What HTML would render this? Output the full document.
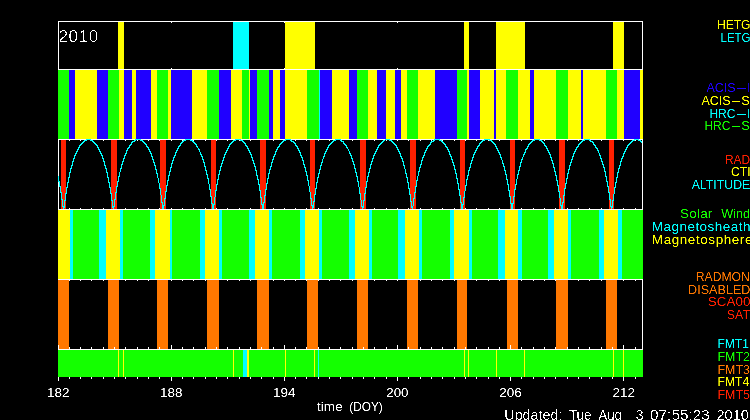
<!DOCTYPE html>
<html><head><meta charset="utf-8"><title>plot</title>
<style>
html,body{margin:0;padding:0;background:#000;}
svg{display:block;}
text{font-family:"Liberation Sans",sans-serif;}
</style></head><body>
<svg width="750" height="420" viewBox="0 0 750 420">
<rect width="750" height="420" fill="#000"/>
<g shape-rendering="crispEdges">
<rect x="58" y="21" width="585" height="1" fill="#ffffff"/>
<rect x="58" y="69" width="585" height="1" fill="#ffffff"/>
<rect x="58" y="21" width="1" height="49" fill="#ffffff"/>
<rect x="642" y="21" width="1" height="49" fill="#ffffff"/>
<rect x="58" y="22" width="1" height="1" fill="#ffffff"/>
<rect x="58" y="68" width="1" height="1" fill="#ffffff"/>
<rect x="171" y="22" width="1" height="1" fill="#ffffff"/>
<rect x="171" y="68" width="1" height="1" fill="#ffffff"/>
<rect x="284" y="22" width="1" height="1" fill="#ffffff"/>
<rect x="284" y="68" width="1" height="1" fill="#ffffff"/>
<rect x="397" y="22" width="1" height="1" fill="#ffffff"/>
<rect x="397" y="68" width="1" height="1" fill="#ffffff"/>
<rect x="510" y="22" width="1" height="1" fill="#ffffff"/>
<rect x="510" y="68" width="1" height="1" fill="#ffffff"/>
<rect x="623" y="22" width="1" height="1" fill="#ffffff"/>
<rect x="623" y="68" width="1" height="1" fill="#ffffff"/>
<rect x="118" y="22" width="6" height="48" fill="#ffff00"/>
<rect x="233" y="22" width="16" height="48" fill="#00ffff"/>
<rect x="285" y="22" width="30" height="48" fill="#ffff00"/>
<rect x="464" y="22" width="5" height="48" fill="#ffff00"/>
<rect x="496" y="22" width="29" height="48" fill="#ffff00"/>
<rect x="613" y="22" width="11" height="48" fill="#ffff00"/>
<rect x="58" y="69" width="585" height="1" fill="#ffffff"/>
<rect x="58" y="139" width="585" height="1" fill="#ffffff"/>
<rect x="58" y="69" width="1" height="71" fill="#ffffff"/>
<rect x="642" y="69" width="1" height="71" fill="#ffffff"/>
<rect x="58" y="70" width="11" height="70" fill="#14ff00"/>
<rect x="69" y="70" width="6" height="70" fill="#2000ff"/>
<rect x="75" y="70" width="22" height="70" fill="#ffff00"/>
<rect x="97" y="70" width="11" height="70" fill="#2000ff"/>
<rect x="108" y="70" width="11" height="70" fill="#14ff00"/>
<rect x="119" y="70" width="5" height="70" fill="#ffff00"/>
<rect x="124" y="70" width="8" height="70" fill="#2000ff"/>
<rect x="132" y="70" width="4" height="70" fill="#ffff00"/>
<rect x="136" y="70" width="15" height="70" fill="#2000ff"/>
<rect x="151" y="70" width="6" height="70" fill="#ffff00"/>
<rect x="157" y="70" width="11" height="70" fill="#14ff00"/>
<rect x="168" y="70" width="3" height="70" fill="#ffff00"/>
<rect x="171" y="70" width="21" height="70" fill="#2000ff"/>
<rect x="192" y="70" width="15" height="70" fill="#ffff00"/>
<rect x="207" y="70" width="12" height="70" fill="#14ff00"/>
<rect x="219" y="70" width="12" height="70" fill="#2000ff"/>
<rect x="231" y="70" width="11" height="70" fill="#ffff00"/>
<rect x="242" y="70" width="7" height="70" fill="#14ff00"/>
<rect x="249" y="70" width="1" height="70" fill="#ffff00"/>
<rect x="250" y="70" width="7" height="70" fill="#2000ff"/>
<rect x="257" y="70" width="12" height="70" fill="#14ff00"/>
<rect x="269" y="70" width="4" height="70" fill="#2000ff"/>
<rect x="273" y="70" width="7" height="70" fill="#ffff00"/>
<rect x="280" y="70" width="5" height="70" fill="#2000ff"/>
<rect x="285" y="70" width="22" height="70" fill="#ffff00"/>
<rect x="307" y="70" width="12" height="70" fill="#14ff00"/>
<rect x="319" y="70" width="1" height="70" fill="#00ffff"/>
<rect x="320" y="70" width="12" height="70" fill="#2000ff"/>
<rect x="332" y="70" width="17" height="70" fill="#ffff00"/>
<rect x="349" y="70" width="8" height="70" fill="#2000ff"/>
<rect x="357" y="70" width="11" height="70" fill="#14ff00"/>
<rect x="368" y="70" width="9" height="70" fill="#ffff00"/>
<rect x="377" y="70" width="9" height="70" fill="#2000ff"/>
<rect x="386" y="70" width="9" height="70" fill="#ffff00"/>
<rect x="395" y="70" width="6" height="70" fill="#2000ff"/>
<rect x="401" y="70" width="6" height="70" fill="#ffff00"/>
<rect x="407" y="70" width="11" height="70" fill="#14ff00"/>
<rect x="418" y="70" width="17" height="70" fill="#ffff00"/>
<rect x="435" y="70" width="22" height="70" fill="#2000ff"/>
<rect x="457" y="70" width="10" height="70" fill="#14ff00"/>
<rect x="467" y="70" width="2" height="70" fill="#ffff00"/>
<rect x="469" y="70" width="11" height="70" fill="#2000ff"/>
<rect x="480" y="70" width="14" height="70" fill="#ffff00"/>
<rect x="494" y="70" width="2" height="70" fill="#2000ff"/>
<rect x="496" y="70" width="10" height="70" fill="#ffff00"/>
<rect x="506" y="70" width="12" height="70" fill="#14ff00"/>
<rect x="518" y="70" width="12" height="70" fill="#ffff00"/>
<rect x="530" y="70" width="4" height="70" fill="#2000ff"/>
<rect x="534" y="70" width="22" height="70" fill="#ffff00"/>
<rect x="556" y="70" width="12" height="70" fill="#14ff00"/>
<rect x="568" y="70" width="13" height="70" fill="#ffff00"/>
<rect x="581" y="70" width="2" height="70" fill="#2000ff"/>
<rect x="583" y="70" width="23" height="70" fill="#ffff00"/>
<rect x="606" y="70" width="11" height="70" fill="#14ff00"/>
<rect x="617" y="70" width="7" height="70" fill="#ffff00"/>
<rect x="624" y="70" width="16" height="70" fill="#2000ff"/>
<rect x="640" y="70" width="3" height="70" fill="#ffff00"/>
<rect x="58" y="139" width="585" height="1" fill="#ffffff"/>
<rect x="58" y="209" width="585" height="1" fill="#ffffff"/>
<rect x="58" y="139" width="1" height="71" fill="#ffffff"/>
<rect x="642" y="139" width="1" height="71" fill="#ffffff"/>
<rect x="58" y="140" width="1" height="1" fill="#ffffff"/>
<rect x="58" y="208" width="1" height="1" fill="#ffffff"/>
<rect x="69" y="140" width="1" height="1" fill="#ffffff"/>
<rect x="69" y="208" width="1" height="1" fill="#ffffff"/>
<rect x="80" y="140" width="1" height="1" fill="#ffffff"/>
<rect x="80" y="208" width="1" height="1" fill="#ffffff"/>
<rect x="91" y="140" width="1" height="1" fill="#ffffff"/>
<rect x="91" y="208" width="1" height="1" fill="#ffffff"/>
<rect x="103" y="140" width="1" height="1" fill="#ffffff"/>
<rect x="103" y="208" width="1" height="1" fill="#ffffff"/>
<rect x="114" y="140" width="1" height="1" fill="#ffffff"/>
<rect x="114" y="208" width="1" height="1" fill="#ffffff"/>
<rect x="125" y="140" width="1" height="1" fill="#ffffff"/>
<rect x="125" y="208" width="1" height="1" fill="#ffffff"/>
<rect x="137" y="140" width="1" height="1" fill="#ffffff"/>
<rect x="137" y="208" width="1" height="1" fill="#ffffff"/>
<rect x="148" y="140" width="1" height="1" fill="#ffffff"/>
<rect x="148" y="208" width="1" height="1" fill="#ffffff"/>
<rect x="159" y="140" width="1" height="1" fill="#ffffff"/>
<rect x="159" y="208" width="1" height="1" fill="#ffffff"/>
<rect x="171" y="140" width="1" height="1" fill="#ffffff"/>
<rect x="171" y="208" width="1" height="1" fill="#ffffff"/>
<rect x="182" y="140" width="1" height="1" fill="#ffffff"/>
<rect x="182" y="208" width="1" height="1" fill="#ffffff"/>
<rect x="193" y="140" width="1" height="1" fill="#ffffff"/>
<rect x="193" y="208" width="1" height="1" fill="#ffffff"/>
<rect x="205" y="140" width="1" height="1" fill="#ffffff"/>
<rect x="205" y="208" width="1" height="1" fill="#ffffff"/>
<rect x="216" y="140" width="1" height="1" fill="#ffffff"/>
<rect x="216" y="208" width="1" height="1" fill="#ffffff"/>
<rect x="227" y="140" width="1" height="1" fill="#ffffff"/>
<rect x="227" y="208" width="1" height="1" fill="#ffffff"/>
<rect x="239" y="140" width="1" height="1" fill="#ffffff"/>
<rect x="239" y="208" width="1" height="1" fill="#ffffff"/>
<rect x="250" y="140" width="1" height="1" fill="#ffffff"/>
<rect x="250" y="208" width="1" height="1" fill="#ffffff"/>
<rect x="261" y="140" width="1" height="1" fill="#ffffff"/>
<rect x="261" y="208" width="1" height="1" fill="#ffffff"/>
<rect x="273" y="140" width="1" height="1" fill="#ffffff"/>
<rect x="273" y="208" width="1" height="1" fill="#ffffff"/>
<rect x="284" y="140" width="1" height="1" fill="#ffffff"/>
<rect x="284" y="208" width="1" height="1" fill="#ffffff"/>
<rect x="295" y="140" width="1" height="1" fill="#ffffff"/>
<rect x="295" y="208" width="1" height="1" fill="#ffffff"/>
<rect x="306" y="140" width="1" height="1" fill="#ffffff"/>
<rect x="306" y="208" width="1" height="1" fill="#ffffff"/>
<rect x="318" y="140" width="1" height="1" fill="#ffffff"/>
<rect x="318" y="208" width="1" height="1" fill="#ffffff"/>
<rect x="329" y="140" width="1" height="1" fill="#ffffff"/>
<rect x="329" y="208" width="1" height="1" fill="#ffffff"/>
<rect x="340" y="140" width="1" height="1" fill="#ffffff"/>
<rect x="340" y="208" width="1" height="1" fill="#ffffff"/>
<rect x="352" y="140" width="1" height="1" fill="#ffffff"/>
<rect x="352" y="208" width="1" height="1" fill="#ffffff"/>
<rect x="363" y="140" width="1" height="1" fill="#ffffff"/>
<rect x="363" y="208" width="1" height="1" fill="#ffffff"/>
<rect x="374" y="140" width="1" height="1" fill="#ffffff"/>
<rect x="374" y="208" width="1" height="1" fill="#ffffff"/>
<rect x="386" y="140" width="1" height="1" fill="#ffffff"/>
<rect x="386" y="208" width="1" height="1" fill="#ffffff"/>
<rect x="397" y="140" width="1" height="1" fill="#ffffff"/>
<rect x="397" y="208" width="1" height="1" fill="#ffffff"/>
<rect x="408" y="140" width="1" height="1" fill="#ffffff"/>
<rect x="408" y="208" width="1" height="1" fill="#ffffff"/>
<rect x="420" y="140" width="1" height="1" fill="#ffffff"/>
<rect x="420" y="208" width="1" height="1" fill="#ffffff"/>
<rect x="431" y="140" width="1" height="1" fill="#ffffff"/>
<rect x="431" y="208" width="1" height="1" fill="#ffffff"/>
<rect x="442" y="140" width="1" height="1" fill="#ffffff"/>
<rect x="442" y="208" width="1" height="1" fill="#ffffff"/>
<rect x="454" y="140" width="1" height="1" fill="#ffffff"/>
<rect x="454" y="208" width="1" height="1" fill="#ffffff"/>
<rect x="465" y="140" width="1" height="1" fill="#ffffff"/>
<rect x="465" y="208" width="1" height="1" fill="#ffffff"/>
<rect x="476" y="140" width="1" height="1" fill="#ffffff"/>
<rect x="476" y="208" width="1" height="1" fill="#ffffff"/>
<rect x="488" y="140" width="1" height="1" fill="#ffffff"/>
<rect x="488" y="208" width="1" height="1" fill="#ffffff"/>
<rect x="499" y="140" width="1" height="1" fill="#ffffff"/>
<rect x="499" y="208" width="1" height="1" fill="#ffffff"/>
<rect x="510" y="140" width="1" height="1" fill="#ffffff"/>
<rect x="510" y="208" width="1" height="1" fill="#ffffff"/>
<rect x="521" y="140" width="1" height="1" fill="#ffffff"/>
<rect x="521" y="208" width="1" height="1" fill="#ffffff"/>
<rect x="533" y="140" width="1" height="1" fill="#ffffff"/>
<rect x="533" y="208" width="1" height="1" fill="#ffffff"/>
<rect x="544" y="140" width="1" height="1" fill="#ffffff"/>
<rect x="544" y="208" width="1" height="1" fill="#ffffff"/>
<rect x="555" y="140" width="1" height="1" fill="#ffffff"/>
<rect x="555" y="208" width="1" height="1" fill="#ffffff"/>
<rect x="567" y="140" width="1" height="1" fill="#ffffff"/>
<rect x="567" y="208" width="1" height="1" fill="#ffffff"/>
<rect x="578" y="140" width="1" height="1" fill="#ffffff"/>
<rect x="578" y="208" width="1" height="1" fill="#ffffff"/>
<rect x="589" y="140" width="1" height="1" fill="#ffffff"/>
<rect x="589" y="208" width="1" height="1" fill="#ffffff"/>
<rect x="601" y="140" width="1" height="1" fill="#ffffff"/>
<rect x="601" y="208" width="1" height="1" fill="#ffffff"/>
<rect x="612" y="140" width="1" height="1" fill="#ffffff"/>
<rect x="612" y="208" width="1" height="1" fill="#ffffff"/>
<rect x="623" y="140" width="1" height="1" fill="#ffffff"/>
<rect x="623" y="208" width="1" height="1" fill="#ffffff"/>
<rect x="635" y="140" width="1" height="1" fill="#ffffff"/>
<rect x="635" y="208" width="1" height="1" fill="#ffffff"/>
<rect x="61" y="140" width="5" height="70" fill="#ff2000"/>
<rect x="111" y="140" width="6" height="70" fill="#ff2000"/>
<rect x="160" y="140" width="6" height="70" fill="#ff2000"/>
<rect x="211" y="140" width="5" height="70" fill="#ff2000"/>
<rect x="260" y="140" width="6" height="70" fill="#ff2000"/>
<rect x="310" y="140" width="5" height="70" fill="#ff2000"/>
<rect x="360" y="140" width="6" height="70" fill="#ff2000"/>
<rect x="410" y="140" width="6" height="70" fill="#ff2000"/>
<rect x="460" y="140" width="5" height="70" fill="#ff2000"/>
<rect x="510" y="140" width="5" height="70" fill="#ff2000"/>
<rect x="559" y="140" width="6" height="70" fill="#ff2000"/>
<rect x="609" y="140" width="5" height="70" fill="#ff2000"/>
<g fill="#00ffff"><rect x="58" y="176" width="1" height="6"/><rect x="59" y="181" width="1" height="6"/><rect x="60" y="186" width="1" height="7"/><rect x="61" y="192" width="1" height="8"/><rect x="62" y="199" width="1" height="8"/><rect x="63" y="206" width="1" height="3"/><rect x="64" y="200" width="1" height="8"/><rect x="65" y="193" width="1" height="8"/><rect x="66" y="187" width="1" height="7"/><rect x="67" y="182" width="1" height="6"/><rect x="68" y="177" width="1" height="6"/><rect x="69" y="172" width="1" height="6"/><rect x="70" y="168" width="1" height="5"/><rect x="71" y="165" width="1" height="4"/><rect x="72" y="161" width="1" height="5"/><rect x="73" y="158" width="1" height="4"/><rect x="74" y="155" width="1" height="4"/><rect x="75" y="153" width="1" height="3"/><rect x="76" y="151" width="1" height="3"/><rect x="77" y="149" width="1" height="3"/><rect x="78" y="147" width="1" height="3"/><rect x="79" y="145" width="1" height="3"/><rect x="80" y="144" width="1" height="2"/><rect x="81" y="143" width="1" height="2"/><rect x="82" y="142" width="1" height="2"/><rect x="83" y="141" width="1" height="2"/><rect x="84" y="140" width="1" height="2"/><rect x="85" y="140" width="1" height="1"/><rect x="86" y="139" width="1" height="2"/><rect x="87" y="139" width="1" height="1"/><rect x="88" y="139" width="1" height="1"/><rect x="89" y="139" width="1" height="1"/><rect x="90" y="139" width="1" height="2"/><rect x="91" y="140" width="1" height="1"/><rect x="92" y="140" width="1" height="2"/><rect x="93" y="141" width="1" height="2"/><rect x="94" y="142" width="1" height="2"/><rect x="95" y="143" width="1" height="2"/><rect x="96" y="144" width="1" height="2"/><rect x="97" y="145" width="1" height="3"/><rect x="98" y="147" width="1" height="3"/><rect x="99" y="149" width="1" height="3"/><rect x="100" y="151" width="1" height="3"/><rect x="101" y="153" width="1" height="3"/><rect x="102" y="155" width="1" height="4"/><rect x="103" y="158" width="1" height="4"/><rect x="104" y="161" width="1" height="5"/><rect x="105" y="165" width="1" height="4"/><rect x="106" y="168" width="1" height="5"/><rect x="107" y="172" width="1" height="6"/><rect x="108" y="177" width="1" height="6"/><rect x="109" y="182" width="1" height="6"/><rect x="110" y="187" width="1" height="7"/><rect x="111" y="193" width="1" height="8"/><rect x="112" y="200" width="1" height="8"/><rect x="113" y="206" width="1" height="3"/><rect x="114" y="199" width="1" height="8"/><rect x="115" y="192" width="1" height="8"/><rect x="116" y="186" width="1" height="7"/><rect x="117" y="181" width="1" height="6"/><rect x="118" y="176" width="1" height="6"/><rect x="119" y="172" width="1" height="5"/><rect x="120" y="168" width="1" height="4"/><rect x="121" y="164" width="1" height="5"/><rect x="122" y="161" width="1" height="4"/><rect x="123" y="158" width="1" height="4"/><rect x="124" y="155" width="1" height="4"/><rect x="125" y="153" width="1" height="3"/><rect x="126" y="150" width="1" height="4"/><rect x="127" y="148" width="1" height="3"/><rect x="128" y="147" width="1" height="2"/><rect x="129" y="145" width="1" height="3"/><rect x="130" y="144" width="1" height="2"/><rect x="131" y="142" width="1" height="3"/><rect x="132" y="141" width="1" height="2"/><rect x="133" y="141" width="1" height="1"/><rect x="134" y="140" width="1" height="2"/><rect x="135" y="139" width="1" height="2"/><rect x="136" y="139" width="1" height="1"/><rect x="137" y="139" width="1" height="1"/><rect x="138" y="139" width="1" height="1"/><rect x="139" y="139" width="1" height="1"/><rect x="140" y="139" width="1" height="2"/><rect x="141" y="140" width="1" height="1"/><rect x="142" y="140" width="1" height="2"/><rect x="143" y="141" width="1" height="2"/><rect x="144" y="142" width="1" height="2"/><rect x="145" y="143" width="1" height="2"/><rect x="146" y="144" width="1" height="3"/><rect x="147" y="146" width="1" height="2"/><rect x="148" y="147" width="1" height="3"/><rect x="149" y="149" width="1" height="3"/><rect x="150" y="151" width="1" height="3"/><rect x="151" y="153" width="1" height="4"/><rect x="152" y="156" width="1" height="4"/><rect x="153" y="159" width="1" height="4"/><rect x="154" y="162" width="1" height="4"/><rect x="155" y="165" width="1" height="5"/><rect x="156" y="169" width="1" height="5"/><rect x="157" y="173" width="1" height="5"/><rect x="158" y="178" width="1" height="5"/><rect x="159" y="183" width="1" height="6"/><rect x="160" y="188" width="1" height="7"/><rect x="161" y="195" width="1" height="8"/><rect x="162" y="202" width="1" height="7"/><rect x="163" y="205" width="1" height="4"/><rect x="164" y="198" width="1" height="8"/><rect x="165" y="191" width="1" height="8"/><rect x="166" y="185" width="1" height="7"/><rect x="167" y="180" width="1" height="6"/><rect x="168" y="175" width="1" height="6"/><rect x="169" y="171" width="1" height="5"/><rect x="170" y="167" width="1" height="5"/><rect x="171" y="163" width="1" height="5"/><rect x="172" y="160" width="1" height="4"/><rect x="173" y="157" width="1" height="4"/><rect x="174" y="155" width="1" height="3"/><rect x="175" y="152" width="1" height="4"/><rect x="176" y="150" width="1" height="3"/><rect x="177" y="148" width="1" height="3"/><rect x="178" y="146" width="1" height="3"/><rect x="179" y="145" width="1" height="2"/><rect x="180" y="143" width="1" height="3"/><rect x="181" y="142" width="1" height="2"/><rect x="182" y="141" width="1" height="2"/><rect x="183" y="140" width="1" height="2"/><rect x="184" y="140" width="1" height="1"/><rect x="185" y="139" width="1" height="2"/><rect x="186" y="139" width="1" height="1"/><rect x="187" y="139" width="1" height="1"/><rect x="188" y="139" width="1" height="1"/><rect x="189" y="139" width="1" height="1"/><rect x="190" y="139" width="1" height="2"/><rect x="191" y="140" width="1" height="1"/><rect x="192" y="140" width="1" height="2"/><rect x="193" y="141" width="1" height="2"/><rect x="194" y="142" width="1" height="2"/><rect x="195" y="143" width="1" height="2"/><rect x="196" y="144" width="1" height="3"/><rect x="197" y="146" width="1" height="2"/><rect x="198" y="148" width="1" height="2"/><rect x="199" y="149" width="1" height="3"/><rect x="200" y="152" width="1" height="3"/><rect x="201" y="154" width="1" height="3"/><rect x="202" y="156" width="1" height="4"/><rect x="203" y="159" width="1" height="4"/><rect x="204" y="162" width="1" height="5"/><rect x="205" y="166" width="1" height="5"/><rect x="206" y="170" width="1" height="5"/><rect x="207" y="174" width="1" height="5"/><rect x="208" y="178" width="1" height="6"/><rect x="209" y="184" width="1" height="6"/><rect x="210" y="189" width="1" height="8"/><rect x="211" y="196" width="1" height="8"/><rect x="212" y="203" width="1" height="6"/><rect x="213" y="204" width="1" height="5"/><rect x="214" y="197" width="1" height="8"/><rect x="215" y="190" width="1" height="7"/><rect x="216" y="184" width="1" height="7"/><rect x="217" y="179" width="1" height="6"/><rect x="218" y="174" width="1" height="6"/><rect x="219" y="170" width="1" height="5"/><rect x="220" y="166" width="1" height="5"/><rect x="221" y="163" width="1" height="4"/><rect x="222" y="160" width="1" height="4"/><rect x="223" y="157" width="1" height="4"/><rect x="224" y="154" width="1" height="4"/><rect x="225" y="152" width="1" height="3"/><rect x="226" y="150" width="1" height="3"/><rect x="227" y="148" width="1" height="3"/><rect x="228" y="146" width="1" height="3"/><rect x="229" y="144" width="1" height="3"/><rect x="230" y="143" width="1" height="2"/><rect x="231" y="142" width="1" height="2"/><rect x="232" y="141" width="1" height="2"/><rect x="233" y="140" width="1" height="2"/><rect x="234" y="140" width="1" height="1"/><rect x="235" y="139" width="1" height="2"/><rect x="236" y="139" width="1" height="1"/><rect x="237" y="139" width="1" height="1"/><rect x="238" y="139" width="1" height="1"/><rect x="239" y="139" width="1" height="1"/><rect x="240" y="139" width="1" height="2"/><rect x="241" y="140" width="1" height="1"/><rect x="242" y="140" width="1" height="2"/><rect x="243" y="141" width="1" height="2"/><rect x="244" y="142" width="1" height="2"/><rect x="245" y="143" width="1" height="3"/><rect x="246" y="145" width="1" height="2"/><rect x="247" y="146" width="1" height="3"/><rect x="248" y="148" width="1" height="3"/><rect x="249" y="150" width="1" height="3"/><rect x="250" y="152" width="1" height="3"/><rect x="251" y="154" width="1" height="4"/><rect x="252" y="157" width="1" height="4"/><rect x="253" y="160" width="1" height="4"/><rect x="254" y="163" width="1" height="4"/><rect x="255" y="166" width="1" height="5"/><rect x="256" y="170" width="1" height="6"/><rect x="257" y="175" width="1" height="5"/><rect x="258" y="179" width="1" height="6"/><rect x="259" y="184" width="1" height="7"/><rect x="260" y="190" width="1" height="8"/><rect x="261" y="197" width="1" height="8"/><rect x="262" y="204" width="1" height="5"/><rect x="263" y="202" width="1" height="7"/><rect x="264" y="195" width="1" height="8"/><rect x="265" y="189" width="1" height="7"/><rect x="266" y="183" width="1" height="7"/><rect x="267" y="178" width="1" height="6"/><rect x="268" y="173" width="1" height="6"/><rect x="269" y="169" width="1" height="5"/><rect x="270" y="166" width="1" height="4"/><rect x="271" y="162" width="1" height="5"/><rect x="272" y="159" width="1" height="4"/><rect x="273" y="156" width="1" height="4"/><rect x="274" y="154" width="1" height="3"/><rect x="275" y="151" width="1" height="4"/><rect x="276" y="149" width="1" height="3"/><rect x="277" y="147" width="1" height="3"/><rect x="278" y="146" width="1" height="2"/><rect x="279" y="144" width="1" height="3"/><rect x="280" y="143" width="1" height="2"/><rect x="281" y="142" width="1" height="2"/><rect x="282" y="141" width="1" height="2"/><rect x="283" y="140" width="1" height="2"/><rect x="284" y="140" width="1" height="1"/><rect x="285" y="139" width="1" height="2"/><rect x="286" y="139" width="1" height="1"/><rect x="287" y="139" width="1" height="1"/><rect x="288" y="139" width="1" height="1"/><rect x="289" y="139" width="1" height="1"/><rect x="290" y="139" width="1" height="2"/><rect x="291" y="140" width="1" height="2"/><rect x="292" y="141" width="1" height="1"/><rect x="293" y="141" width="1" height="2"/><rect x="294" y="142" width="1" height="2"/><rect x="295" y="143" width="1" height="3"/><rect x="296" y="145" width="1" height="2"/><rect x="297" y="146" width="1" height="3"/><rect x="298" y="148" width="1" height="3"/><rect x="299" y="150" width="1" height="3"/><rect x="300" y="152" width="1" height="4"/><rect x="301" y="155" width="1" height="3"/><rect x="302" y="157" width="1" height="4"/><rect x="303" y="160" width="1" height="5"/><rect x="304" y="164" width="1" height="4"/><rect x="305" y="167" width="1" height="5"/><rect x="306" y="171" width="1" height="5"/><rect x="307" y="175" width="1" height="6"/><rect x="308" y="180" width="1" height="6"/><rect x="309" y="186" width="1" height="6"/><rect x="310" y="192" width="1" height="7"/><rect x="311" y="198" width="1" height="8"/><rect x="312" y="205" width="1" height="4"/><rect x="313" y="201" width="1" height="7"/><rect x="314" y="194" width="1" height="8"/><rect x="315" y="188" width="1" height="7"/><rect x="316" y="182" width="1" height="7"/><rect x="317" y="177" width="1" height="6"/><rect x="318" y="173" width="1" height="5"/><rect x="319" y="169" width="1" height="5"/><rect x="320" y="165" width="1" height="5"/><rect x="321" y="162" width="1" height="4"/><rect x="322" y="159" width="1" height="4"/><rect x="323" y="156" width="1" height="3"/><rect x="324" y="153" width="1" height="4"/><rect x="325" y="151" width="1" height="3"/><rect x="326" y="149" width="1" height="3"/><rect x="327" y="147" width="1" height="3"/><rect x="328" y="145" width="1" height="3"/><rect x="329" y="144" width="1" height="2"/><rect x="330" y="143" width="1" height="2"/><rect x="331" y="142" width="1" height="2"/><rect x="332" y="141" width="1" height="2"/><rect x="333" y="140" width="1" height="2"/><rect x="334" y="140" width="1" height="1"/><rect x="335" y="139" width="1" height="2"/><rect x="336" y="139" width="1" height="1"/><rect x="337" y="139" width="1" height="1"/><rect x="338" y="139" width="1" height="1"/><rect x="339" y="139" width="1" height="1"/><rect x="340" y="139" width="1" height="2"/><rect x="341" y="140" width="1" height="2"/><rect x="342" y="141" width="1" height="1"/><rect x="343" y="141" width="1" height="3"/><rect x="344" y="143" width="1" height="2"/><rect x="345" y="144" width="1" height="2"/><rect x="346" y="145" width="1" height="3"/><rect x="347" y="147" width="1" height="2"/><rect x="348" y="149" width="1" height="2"/><rect x="349" y="151" width="1" height="3"/><rect x="350" y="153" width="1" height="3"/><rect x="351" y="155" width="1" height="4"/><rect x="352" y="158" width="1" height="4"/><rect x="353" y="161" width="1" height="4"/><rect x="354" y="164" width="1" height="5"/><rect x="355" y="168" width="1" height="5"/><rect x="356" y="172" width="1" height="5"/><rect x="357" y="176" width="1" height="6"/><rect x="358" y="181" width="1" height="6"/><rect x="359" y="187" width="1" height="7"/><rect x="360" y="193" width="1" height="7"/><rect x="361" y="200" width="1" height="7"/><rect x="362" y="206" width="1" height="3"/><rect x="363" y="200" width="1" height="8"/><rect x="364" y="193" width="1" height="8"/><rect x="365" y="187" width="1" height="7"/><rect x="366" y="181" width="1" height="7"/><rect x="367" y="176" width="1" height="6"/><rect x="368" y="172" width="1" height="5"/><rect x="369" y="168" width="1" height="5"/><rect x="370" y="164" width="1" height="5"/><rect x="371" y="161" width="1" height="4"/><rect x="372" y="158" width="1" height="4"/><rect x="373" y="155" width="1" height="4"/><rect x="374" y="153" width="1" height="3"/><rect x="375" y="151" width="1" height="3"/><rect x="376" y="149" width="1" height="3"/><rect x="377" y="147" width="1" height="3"/><rect x="378" y="145" width="1" height="3"/><rect x="379" y="144" width="1" height="2"/><rect x="380" y="143" width="1" height="2"/><rect x="381" y="142" width="1" height="2"/><rect x="382" y="141" width="1" height="2"/><rect x="383" y="140" width="1" height="2"/><rect x="384" y="140" width="1" height="1"/><rect x="385" y="139" width="1" height="1"/><rect x="386" y="139" width="1" height="1"/><rect x="387" y="139" width="1" height="1"/><rect x="388" y="139" width="1" height="1"/><rect x="389" y="139" width="1" height="2"/><rect x="390" y="140" width="1" height="1"/><rect x="391" y="140" width="1" height="2"/><rect x="392" y="141" width="1" height="2"/><rect x="393" y="142" width="1" height="2"/><rect x="394" y="143" width="1" height="2"/><rect x="395" y="144" width="1" height="2"/><rect x="396" y="145" width="1" height="3"/><rect x="397" y="147" width="1" height="3"/><rect x="398" y="149" width="1" height="3"/><rect x="399" y="151" width="1" height="3"/><rect x="400" y="153" width="1" height="4"/><rect x="401" y="156" width="1" height="3"/><rect x="402" y="158" width="1" height="4"/><rect x="403" y="161" width="1" height="5"/><rect x="404" y="165" width="1" height="4"/><rect x="405" y="169" width="1" height="5"/><rect x="406" y="173" width="1" height="5"/><rect x="407" y="177" width="1" height="6"/><rect x="408" y="182" width="1" height="7"/><rect x="409" y="188" width="1" height="7"/><rect x="410" y="194" width="1" height="8"/><rect x="411" y="201" width="1" height="7"/><rect x="412" y="206" width="1" height="3"/><rect x="413" y="198" width="1" height="8"/><rect x="414" y="192" width="1" height="7"/><rect x="415" y="186" width="1" height="7"/><rect x="416" y="180" width="1" height="7"/><rect x="417" y="176" width="1" height="5"/><rect x="418" y="171" width="1" height="5"/><rect x="419" y="167" width="1" height="5"/><rect x="420" y="164" width="1" height="4"/><rect x="421" y="160" width="1" height="5"/><rect x="422" y="157" width="1" height="4"/><rect x="423" y="155" width="1" height="3"/><rect x="424" y="152" width="1" height="4"/><rect x="425" y="150" width="1" height="3"/><rect x="426" y="148" width="1" height="3"/><rect x="427" y="146" width="1" height="3"/><rect x="428" y="145" width="1" height="2"/><rect x="429" y="144" width="1" height="2"/><rect x="430" y="142" width="1" height="3"/><rect x="431" y="141" width="1" height="2"/><rect x="432" y="141" width="1" height="1"/><rect x="433" y="140" width="1" height="2"/><rect x="434" y="139" width="1" height="2"/><rect x="435" y="139" width="1" height="1"/><rect x="436" y="139" width="1" height="1"/><rect x="437" y="139" width="1" height="1"/><rect x="438" y="139" width="1" height="1"/><rect x="439" y="139" width="1" height="2"/><rect x="440" y="140" width="1" height="1"/><rect x="441" y="140" width="1" height="2"/><rect x="442" y="141" width="1" height="2"/><rect x="443" y="142" width="1" height="2"/><rect x="444" y="143" width="1" height="2"/><rect x="445" y="144" width="1" height="3"/><rect x="446" y="146" width="1" height="2"/><rect x="447" y="147" width="1" height="3"/><rect x="448" y="149" width="1" height="3"/><rect x="449" y="151" width="1" height="4"/><rect x="450" y="154" width="1" height="3"/><rect x="451" y="156" width="1" height="4"/><rect x="452" y="159" width="1" height="4"/><rect x="453" y="162" width="1" height="4"/><rect x="454" y="165" width="1" height="5"/><rect x="455" y="169" width="1" height="5"/><rect x="456" y="173" width="1" height="6"/><rect x="457" y="178" width="1" height="6"/><rect x="458" y="183" width="1" height="7"/><rect x="459" y="189" width="1" height="7"/><rect x="460" y="195" width="1" height="8"/><rect x="461" y="202" width="1" height="7"/><rect x="462" y="204" width="1" height="5"/><rect x="463" y="197" width="1" height="8"/><rect x="464" y="191" width="1" height="7"/><rect x="465" y="185" width="1" height="6"/><rect x="466" y="179" width="1" height="7"/><rect x="467" y="175" width="1" height="5"/><rect x="468" y="170" width="1" height="6"/><rect x="469" y="167" width="1" height="4"/><rect x="470" y="163" width="1" height="5"/><rect x="471" y="160" width="1" height="4"/><rect x="472" y="157" width="1" height="4"/><rect x="473" y="154" width="1" height="4"/><rect x="474" y="152" width="1" height="3"/><rect x="475" y="150" width="1" height="3"/><rect x="476" y="148" width="1" height="3"/><rect x="477" y="146" width="1" height="3"/><rect x="478" y="145" width="1" height="2"/><rect x="479" y="143" width="1" height="3"/><rect x="480" y="142" width="1" height="2"/><rect x="481" y="141" width="1" height="2"/><rect x="482" y="140" width="1" height="2"/><rect x="483" y="140" width="1" height="1"/><rect x="484" y="139" width="1" height="2"/><rect x="485" y="139" width="1" height="1"/><rect x="486" y="139" width="1" height="1"/><rect x="487" y="139" width="1" height="1"/><rect x="488" y="139" width="1" height="1"/><rect x="489" y="139" width="1" height="2"/><rect x="490" y="140" width="1" height="1"/><rect x="491" y="140" width="1" height="2"/><rect x="492" y="141" width="1" height="2"/><rect x="493" y="142" width="1" height="2"/><rect x="494" y="143" width="1" height="2"/><rect x="495" y="144" width="1" height="3"/><rect x="496" y="146" width="1" height="3"/><rect x="497" y="148" width="1" height="3"/><rect x="498" y="150" width="1" height="3"/><rect x="499" y="152" width="1" height="3"/><rect x="500" y="154" width="1" height="4"/><rect x="501" y="157" width="1" height="3"/><rect x="502" y="160" width="1" height="4"/><rect x="503" y="163" width="1" height="4"/><rect x="504" y="166" width="1" height="5"/><rect x="505" y="170" width="1" height="5"/><rect x="506" y="174" width="1" height="6"/><rect x="507" y="179" width="1" height="6"/><rect x="508" y="184" width="1" height="7"/><rect x="509" y="190" width="1" height="7"/><rect x="510" y="196" width="1" height="8"/><rect x="511" y="203" width="1" height="6"/><rect x="512" y="203" width="1" height="6"/><rect x="513" y="196" width="1" height="8"/><rect x="514" y="189" width="1" height="8"/><rect x="515" y="184" width="1" height="6"/><rect x="516" y="179" width="1" height="6"/><rect x="517" y="174" width="1" height="5"/><rect x="518" y="170" width="1" height="5"/><rect x="519" y="166" width="1" height="5"/><rect x="520" y="162" width="1" height="5"/><rect x="521" y="159" width="1" height="4"/><rect x="522" y="157" width="1" height="3"/><rect x="523" y="154" width="1" height="3"/><rect x="524" y="152" width="1" height="3"/><rect x="525" y="149" width="1" height="4"/><rect x="526" y="148" width="1" height="2"/><rect x="527" y="146" width="1" height="3"/><rect x="528" y="144" width="1" height="3"/><rect x="529" y="143" width="1" height="2"/><rect x="530" y="142" width="1" height="2"/><rect x="531" y="141" width="1" height="2"/><rect x="532" y="140" width="1" height="2"/><rect x="533" y="140" width="1" height="1"/><rect x="534" y="139" width="1" height="2"/><rect x="535" y="139" width="1" height="1"/><rect x="536" y="139" width="1" height="1"/><rect x="537" y="139" width="1" height="1"/><rect x="538" y="139" width="1" height="1"/><rect x="539" y="139" width="1" height="2"/><rect x="540" y="140" width="1" height="1"/><rect x="541" y="140" width="1" height="2"/><rect x="542" y="141" width="1" height="2"/><rect x="543" y="142" width="1" height="2"/><rect x="544" y="143" width="1" height="3"/><rect x="545" y="145" width="1" height="2"/><rect x="546" y="146" width="1" height="3"/><rect x="547" y="148" width="1" height="3"/><rect x="548" y="150" width="1" height="3"/><rect x="549" y="152" width="1" height="3"/><rect x="550" y="154" width="1" height="4"/><rect x="551" y="157" width="1" height="4"/><rect x="552" y="160" width="1" height="4"/><rect x="553" y="163" width="1" height="5"/><rect x="554" y="167" width="1" height="5"/><rect x="555" y="171" width="1" height="5"/><rect x="556" y="175" width="1" height="6"/><rect x="557" y="180" width="1" height="6"/><rect x="558" y="185" width="1" height="7"/><rect x="559" y="191" width="1" height="7"/><rect x="560" y="198" width="1" height="8"/><rect x="561" y="205" width="1" height="4"/><rect x="562" y="202" width="1" height="7"/><rect x="563" y="195" width="1" height="8"/><rect x="564" y="188" width="1" height="8"/><rect x="565" y="183" width="1" height="6"/><rect x="566" y="178" width="1" height="6"/><rect x="567" y="173" width="1" height="6"/><rect x="568" y="169" width="1" height="5"/><rect x="569" y="165" width="1" height="5"/><rect x="570" y="162" width="1" height="4"/><rect x="571" y="159" width="1" height="4"/><rect x="572" y="156" width="1" height="4"/><rect x="573" y="153" width="1" height="4"/><rect x="574" y="151" width="1" height="3"/><rect x="575" y="149" width="1" height="3"/><rect x="576" y="147" width="1" height="3"/><rect x="577" y="146" width="1" height="2"/><rect x="578" y="144" width="1" height="3"/><rect x="579" y="143" width="1" height="2"/><rect x="580" y="142" width="1" height="2"/><rect x="581" y="141" width="1" height="2"/><rect x="582" y="140" width="1" height="2"/><rect x="583" y="140" width="1" height="1"/><rect x="584" y="139" width="1" height="2"/><rect x="585" y="139" width="1" height="1"/><rect x="586" y="139" width="1" height="1"/><rect x="587" y="139" width="1" height="1"/><rect x="588" y="139" width="1" height="1"/><rect x="589" y="139" width="1" height="2"/><rect x="590" y="140" width="1" height="2"/><rect x="591" y="141" width="1" height="1"/><rect x="592" y="141" width="1" height="2"/><rect x="593" y="142" width="1" height="3"/><rect x="594" y="144" width="1" height="2"/><rect x="595" y="145" width="1" height="3"/><rect x="596" y="147" width="1" height="2"/><rect x="597" y="148" width="1" height="3"/><rect x="598" y="150" width="1" height="3"/><rect x="599" y="153" width="1" height="3"/><rect x="600" y="155" width="1" height="4"/><rect x="601" y="158" width="1" height="4"/><rect x="602" y="161" width="1" height="4"/><rect x="603" y="164" width="1" height="4"/><rect x="604" y="167" width="1" height="5"/><rect x="605" y="171" width="1" height="6"/><rect x="606" y="176" width="1" height="6"/><rect x="607" y="181" width="1" height="6"/><rect x="608" y="186" width="1" height="7"/><rect x="609" y="192" width="1" height="8"/><rect x="610" y="199" width="1" height="8"/><rect x="611" y="206" width="1" height="3"/><rect x="612" y="200" width="1" height="8"/><rect x="613" y="194" width="1" height="7"/><rect x="614" y="187" width="1" height="7"/><rect x="615" y="182" width="1" height="6"/><rect x="616" y="177" width="1" height="6"/><rect x="617" y="172" width="1" height="6"/><rect x="618" y="168" width="1" height="5"/><rect x="619" y="165" width="1" height="4"/><rect x="620" y="161" width="1" height="5"/><rect x="621" y="158" width="1" height="4"/><rect x="622" y="156" width="1" height="3"/><rect x="623" y="153" width="1" height="4"/><rect x="624" y="151" width="1" height="3"/><rect x="625" y="149" width="1" height="3"/><rect x="626" y="147" width="1" height="3"/><rect x="627" y="145" width="1" height="3"/><rect x="628" y="144" width="1" height="2"/><rect x="629" y="143" width="1" height="2"/><rect x="630" y="142" width="1" height="2"/><rect x="631" y="141" width="1" height="2"/><rect x="632" y="140" width="1" height="2"/><rect x="633" y="140" width="1" height="1"/><rect x="634" y="139" width="1" height="2"/><rect x="635" y="139" width="1" height="1"/><rect x="636" y="139" width="1" height="1"/><rect x="637" y="139" width="1" height="1"/><rect x="638" y="139" width="1" height="2"/><rect x="639" y="140" width="1" height="1"/><rect x="640" y="140" width="1" height="2"/><rect x="641" y="141" width="1" height="2"/></g>
<rect x="58" y="209" width="585" height="1" fill="#ffffff"/>
<rect x="58" y="279" width="585" height="1" fill="#ffffff"/>
<rect x="58" y="209" width="1" height="71" fill="#ffffff"/>
<rect x="642" y="209" width="1" height="71" fill="#ffffff"/>
<rect x="58" y="210" width="12" height="70" fill="#ffff00"/>
<rect x="70" y="210" width="3" height="70" fill="#00ffff"/>
<rect x="73" y="210" width="26" height="70" fill="#14ff00"/>
<rect x="99" y="210" width="7" height="70" fill="#00ffff"/>
<rect x="106" y="210" width="14" height="70" fill="#ffff00"/>
<rect x="120" y="210" width="3" height="70" fill="#00ffff"/>
<rect x="123" y="210" width="27" height="70" fill="#14ff00"/>
<rect x="150" y="210" width="5" height="70" fill="#00ffff"/>
<rect x="155" y="210" width="15" height="70" fill="#ffff00"/>
<rect x="170" y="210" width="2" height="70" fill="#00ffff"/>
<rect x="172" y="210" width="28" height="70" fill="#14ff00"/>
<rect x="200" y="210" width="5" height="70" fill="#00ffff"/>
<rect x="205" y="210" width="14" height="70" fill="#ffff00"/>
<rect x="219" y="210" width="3" height="70" fill="#00ffff"/>
<rect x="222" y="210" width="27" height="70" fill="#14ff00"/>
<rect x="249" y="210" width="6" height="70" fill="#00ffff"/>
<rect x="255" y="210" width="14" height="70" fill="#ffff00"/>
<rect x="269" y="210" width="3" height="70" fill="#00ffff"/>
<rect x="272" y="210" width="28" height="70" fill="#14ff00"/>
<rect x="300" y="210" width="5" height="70" fill="#00ffff"/>
<rect x="305" y="210" width="14" height="70" fill="#ffff00"/>
<rect x="319" y="210" width="3" height="70" fill="#00ffff"/>
<rect x="322" y="210" width="27" height="70" fill="#14ff00"/>
<rect x="349" y="210" width="6" height="70" fill="#00ffff"/>
<rect x="355" y="210" width="14" height="70" fill="#ffff00"/>
<rect x="369" y="210" width="3" height="70" fill="#00ffff"/>
<rect x="372" y="210" width="26" height="70" fill="#14ff00"/>
<rect x="398" y="210" width="7" height="70" fill="#00ffff"/>
<rect x="405" y="210" width="14" height="70" fill="#ffff00"/>
<rect x="419" y="210" width="3" height="70" fill="#00ffff"/>
<rect x="422" y="210" width="28" height="70" fill="#14ff00"/>
<rect x="450" y="210" width="4" height="70" fill="#00ffff"/>
<rect x="454" y="210" width="15" height="70" fill="#ffff00"/>
<rect x="469" y="210" width="3" height="70" fill="#00ffff"/>
<rect x="472" y="210" width="26" height="70" fill="#14ff00"/>
<rect x="498" y="210" width="7" height="70" fill="#00ffff"/>
<rect x="505" y="210" width="13" height="70" fill="#ffff00"/>
<rect x="518" y="210" width="4" height="70" fill="#00ffff"/>
<rect x="522" y="210" width="26" height="70" fill="#14ff00"/>
<rect x="548" y="210" width="6" height="70" fill="#00ffff"/>
<rect x="554" y="210" width="14" height="70" fill="#ffff00"/>
<rect x="568" y="210" width="3" height="70" fill="#00ffff"/>
<rect x="571" y="210" width="28" height="70" fill="#14ff00"/>
<rect x="599" y="210" width="5" height="70" fill="#00ffff"/>
<rect x="604" y="210" width="14" height="70" fill="#ffff00"/>
<rect x="618" y="210" width="4" height="70" fill="#00ffff"/>
<rect x="622" y="210" width="21" height="70" fill="#14ff00"/>
<rect x="58" y="279" width="585" height="1" fill="#ffffff"/>
<rect x="58" y="349" width="585" height="1" fill="#ffffff"/>
<rect x="58" y="279" width="1" height="71" fill="#ffffff"/>
<rect x="642" y="279" width="1" height="71" fill="#ffffff"/>
<rect x="58" y="280" width="1" height="1" fill="#ffffff"/>
<rect x="58" y="348" width="1" height="1" fill="#ffffff"/>
<rect x="69" y="280" width="1" height="1" fill="#ffffff"/>
<rect x="69" y="348" width="1" height="1" fill="#ffffff"/>
<rect x="80" y="280" width="1" height="1" fill="#ffffff"/>
<rect x="80" y="348" width="1" height="1" fill="#ffffff"/>
<rect x="91" y="280" width="1" height="1" fill="#ffffff"/>
<rect x="91" y="348" width="1" height="1" fill="#ffffff"/>
<rect x="103" y="280" width="1" height="1" fill="#ffffff"/>
<rect x="103" y="348" width="1" height="1" fill="#ffffff"/>
<rect x="114" y="280" width="1" height="1" fill="#ffffff"/>
<rect x="114" y="348" width="1" height="1" fill="#ffffff"/>
<rect x="125" y="280" width="1" height="1" fill="#ffffff"/>
<rect x="125" y="348" width="1" height="1" fill="#ffffff"/>
<rect x="137" y="280" width="1" height="1" fill="#ffffff"/>
<rect x="137" y="348" width="1" height="1" fill="#ffffff"/>
<rect x="148" y="280" width="1" height="1" fill="#ffffff"/>
<rect x="148" y="348" width="1" height="1" fill="#ffffff"/>
<rect x="159" y="280" width="1" height="1" fill="#ffffff"/>
<rect x="159" y="348" width="1" height="1" fill="#ffffff"/>
<rect x="171" y="280" width="1" height="1" fill="#ffffff"/>
<rect x="171" y="348" width="1" height="1" fill="#ffffff"/>
<rect x="182" y="280" width="1" height="1" fill="#ffffff"/>
<rect x="182" y="348" width="1" height="1" fill="#ffffff"/>
<rect x="193" y="280" width="1" height="1" fill="#ffffff"/>
<rect x="193" y="348" width="1" height="1" fill="#ffffff"/>
<rect x="205" y="280" width="1" height="1" fill="#ffffff"/>
<rect x="205" y="348" width="1" height="1" fill="#ffffff"/>
<rect x="216" y="280" width="1" height="1" fill="#ffffff"/>
<rect x="216" y="348" width="1" height="1" fill="#ffffff"/>
<rect x="227" y="280" width="1" height="1" fill="#ffffff"/>
<rect x="227" y="348" width="1" height="1" fill="#ffffff"/>
<rect x="239" y="280" width="1" height="1" fill="#ffffff"/>
<rect x="239" y="348" width="1" height="1" fill="#ffffff"/>
<rect x="250" y="280" width="1" height="1" fill="#ffffff"/>
<rect x="250" y="348" width="1" height="1" fill="#ffffff"/>
<rect x="261" y="280" width="1" height="1" fill="#ffffff"/>
<rect x="261" y="348" width="1" height="1" fill="#ffffff"/>
<rect x="273" y="280" width="1" height="1" fill="#ffffff"/>
<rect x="273" y="348" width="1" height="1" fill="#ffffff"/>
<rect x="284" y="280" width="1" height="1" fill="#ffffff"/>
<rect x="284" y="348" width="1" height="1" fill="#ffffff"/>
<rect x="295" y="280" width="1" height="1" fill="#ffffff"/>
<rect x="295" y="348" width="1" height="1" fill="#ffffff"/>
<rect x="306" y="280" width="1" height="1" fill="#ffffff"/>
<rect x="306" y="348" width="1" height="1" fill="#ffffff"/>
<rect x="318" y="280" width="1" height="1" fill="#ffffff"/>
<rect x="318" y="348" width="1" height="1" fill="#ffffff"/>
<rect x="329" y="280" width="1" height="1" fill="#ffffff"/>
<rect x="329" y="348" width="1" height="1" fill="#ffffff"/>
<rect x="340" y="280" width="1" height="1" fill="#ffffff"/>
<rect x="340" y="348" width="1" height="1" fill="#ffffff"/>
<rect x="352" y="280" width="1" height="1" fill="#ffffff"/>
<rect x="352" y="348" width="1" height="1" fill="#ffffff"/>
<rect x="363" y="280" width="1" height="1" fill="#ffffff"/>
<rect x="363" y="348" width="1" height="1" fill="#ffffff"/>
<rect x="374" y="280" width="1" height="1" fill="#ffffff"/>
<rect x="374" y="348" width="1" height="1" fill="#ffffff"/>
<rect x="386" y="280" width="1" height="1" fill="#ffffff"/>
<rect x="386" y="348" width="1" height="1" fill="#ffffff"/>
<rect x="397" y="280" width="1" height="1" fill="#ffffff"/>
<rect x="397" y="348" width="1" height="1" fill="#ffffff"/>
<rect x="408" y="280" width="1" height="1" fill="#ffffff"/>
<rect x="408" y="348" width="1" height="1" fill="#ffffff"/>
<rect x="420" y="280" width="1" height="1" fill="#ffffff"/>
<rect x="420" y="348" width="1" height="1" fill="#ffffff"/>
<rect x="431" y="280" width="1" height="1" fill="#ffffff"/>
<rect x="431" y="348" width="1" height="1" fill="#ffffff"/>
<rect x="442" y="280" width="1" height="1" fill="#ffffff"/>
<rect x="442" y="348" width="1" height="1" fill="#ffffff"/>
<rect x="454" y="280" width="1" height="1" fill="#ffffff"/>
<rect x="454" y="348" width="1" height="1" fill="#ffffff"/>
<rect x="465" y="280" width="1" height="1" fill="#ffffff"/>
<rect x="465" y="348" width="1" height="1" fill="#ffffff"/>
<rect x="476" y="280" width="1" height="1" fill="#ffffff"/>
<rect x="476" y="348" width="1" height="1" fill="#ffffff"/>
<rect x="488" y="280" width="1" height="1" fill="#ffffff"/>
<rect x="488" y="348" width="1" height="1" fill="#ffffff"/>
<rect x="499" y="280" width="1" height="1" fill="#ffffff"/>
<rect x="499" y="348" width="1" height="1" fill="#ffffff"/>
<rect x="510" y="280" width="1" height="1" fill="#ffffff"/>
<rect x="510" y="348" width="1" height="1" fill="#ffffff"/>
<rect x="521" y="280" width="1" height="1" fill="#ffffff"/>
<rect x="521" y="348" width="1" height="1" fill="#ffffff"/>
<rect x="533" y="280" width="1" height="1" fill="#ffffff"/>
<rect x="533" y="348" width="1" height="1" fill="#ffffff"/>
<rect x="544" y="280" width="1" height="1" fill="#ffffff"/>
<rect x="544" y="348" width="1" height="1" fill="#ffffff"/>
<rect x="555" y="280" width="1" height="1" fill="#ffffff"/>
<rect x="555" y="348" width="1" height="1" fill="#ffffff"/>
<rect x="567" y="280" width="1" height="1" fill="#ffffff"/>
<rect x="567" y="348" width="1" height="1" fill="#ffffff"/>
<rect x="578" y="280" width="1" height="1" fill="#ffffff"/>
<rect x="578" y="348" width="1" height="1" fill="#ffffff"/>
<rect x="589" y="280" width="1" height="1" fill="#ffffff"/>
<rect x="589" y="348" width="1" height="1" fill="#ffffff"/>
<rect x="601" y="280" width="1" height="1" fill="#ffffff"/>
<rect x="601" y="348" width="1" height="1" fill="#ffffff"/>
<rect x="612" y="280" width="1" height="1" fill="#ffffff"/>
<rect x="612" y="348" width="1" height="1" fill="#ffffff"/>
<rect x="623" y="280" width="1" height="1" fill="#ffffff"/>
<rect x="623" y="348" width="1" height="1" fill="#ffffff"/>
<rect x="635" y="280" width="1" height="1" fill="#ffffff"/>
<rect x="635" y="348" width="1" height="1" fill="#ffffff"/>
<rect x="58" y="280" width="11" height="70" fill="#ff7800"/>
<rect x="108" y="280" width="11" height="70" fill="#ff7800"/>
<rect x="157" y="280" width="11" height="70" fill="#ff7800"/>
<rect x="207" y="280" width="12" height="70" fill="#ff7800"/>
<rect x="257" y="280" width="12" height="70" fill="#ff7800"/>
<rect x="307" y="280" width="11" height="70" fill="#ff7800"/>
<rect x="357" y="280" width="11" height="70" fill="#ff7800"/>
<rect x="407" y="280" width="11" height="70" fill="#ff7800"/>
<rect x="457" y="280" width="10" height="70" fill="#ff7800"/>
<rect x="507" y="280" width="11" height="70" fill="#ff7800"/>
<rect x="556" y="280" width="12" height="70" fill="#ff7800"/>
<rect x="606" y="280" width="11" height="70" fill="#ff7800"/>
<rect x="58" y="349" width="585" height="1" fill="#ffffff"/>
<rect x="58" y="376" width="585" height="1" fill="#ffffff"/>
<rect x="58" y="349" width="1" height="28" fill="#ffffff"/>
<rect x="642" y="349" width="1" height="28" fill="#ffffff"/>
<rect x="58" y="345" width="1" height="4" fill="#ffffff"/>
<rect x="58" y="377" width="1" height="4" fill="#ffffff"/>
<rect x="69" y="347" width="1" height="2" fill="#ffffff"/>
<rect x="69" y="377" width="1" height="2" fill="#ffffff"/>
<rect x="80" y="347" width="1" height="2" fill="#ffffff"/>
<rect x="80" y="377" width="1" height="2" fill="#ffffff"/>
<rect x="91" y="347" width="1" height="2" fill="#ffffff"/>
<rect x="91" y="377" width="1" height="2" fill="#ffffff"/>
<rect x="103" y="347" width="1" height="2" fill="#ffffff"/>
<rect x="103" y="377" width="1" height="2" fill="#ffffff"/>
<rect x="114" y="347" width="1" height="2" fill="#ffffff"/>
<rect x="114" y="377" width="1" height="2" fill="#ffffff"/>
<rect x="125" y="347" width="1" height="2" fill="#ffffff"/>
<rect x="125" y="377" width="1" height="2" fill="#ffffff"/>
<rect x="137" y="347" width="1" height="2" fill="#ffffff"/>
<rect x="137" y="377" width="1" height="2" fill="#ffffff"/>
<rect x="148" y="347" width="1" height="2" fill="#ffffff"/>
<rect x="148" y="377" width="1" height="2" fill="#ffffff"/>
<rect x="159" y="347" width="1" height="2" fill="#ffffff"/>
<rect x="159" y="377" width="1" height="2" fill="#ffffff"/>
<rect x="171" y="345" width="1" height="4" fill="#ffffff"/>
<rect x="171" y="377" width="1" height="4" fill="#ffffff"/>
<rect x="182" y="347" width="1" height="2" fill="#ffffff"/>
<rect x="182" y="377" width="1" height="2" fill="#ffffff"/>
<rect x="193" y="347" width="1" height="2" fill="#ffffff"/>
<rect x="193" y="377" width="1" height="2" fill="#ffffff"/>
<rect x="205" y="347" width="1" height="2" fill="#ffffff"/>
<rect x="205" y="377" width="1" height="2" fill="#ffffff"/>
<rect x="216" y="347" width="1" height="2" fill="#ffffff"/>
<rect x="216" y="377" width="1" height="2" fill="#ffffff"/>
<rect x="227" y="347" width="1" height="2" fill="#ffffff"/>
<rect x="227" y="377" width="1" height="2" fill="#ffffff"/>
<rect x="239" y="347" width="1" height="2" fill="#ffffff"/>
<rect x="239" y="377" width="1" height="2" fill="#ffffff"/>
<rect x="250" y="347" width="1" height="2" fill="#ffffff"/>
<rect x="250" y="377" width="1" height="2" fill="#ffffff"/>
<rect x="261" y="347" width="1" height="2" fill="#ffffff"/>
<rect x="261" y="377" width="1" height="2" fill="#ffffff"/>
<rect x="273" y="347" width="1" height="2" fill="#ffffff"/>
<rect x="273" y="377" width="1" height="2" fill="#ffffff"/>
<rect x="284" y="345" width="1" height="4" fill="#ffffff"/>
<rect x="284" y="377" width="1" height="4" fill="#ffffff"/>
<rect x="295" y="347" width="1" height="2" fill="#ffffff"/>
<rect x="295" y="377" width="1" height="2" fill="#ffffff"/>
<rect x="306" y="347" width="1" height="2" fill="#ffffff"/>
<rect x="306" y="377" width="1" height="2" fill="#ffffff"/>
<rect x="318" y="347" width="1" height="2" fill="#ffffff"/>
<rect x="318" y="377" width="1" height="2" fill="#ffffff"/>
<rect x="329" y="347" width="1" height="2" fill="#ffffff"/>
<rect x="329" y="377" width="1" height="2" fill="#ffffff"/>
<rect x="340" y="347" width="1" height="2" fill="#ffffff"/>
<rect x="340" y="377" width="1" height="2" fill="#ffffff"/>
<rect x="352" y="347" width="1" height="2" fill="#ffffff"/>
<rect x="352" y="377" width="1" height="2" fill="#ffffff"/>
<rect x="363" y="347" width="1" height="2" fill="#ffffff"/>
<rect x="363" y="377" width="1" height="2" fill="#ffffff"/>
<rect x="374" y="347" width="1" height="2" fill="#ffffff"/>
<rect x="374" y="377" width="1" height="2" fill="#ffffff"/>
<rect x="386" y="347" width="1" height="2" fill="#ffffff"/>
<rect x="386" y="377" width="1" height="2" fill="#ffffff"/>
<rect x="397" y="345" width="1" height="4" fill="#ffffff"/>
<rect x="397" y="377" width="1" height="4" fill="#ffffff"/>
<rect x="408" y="347" width="1" height="2" fill="#ffffff"/>
<rect x="408" y="377" width="1" height="2" fill="#ffffff"/>
<rect x="420" y="347" width="1" height="2" fill="#ffffff"/>
<rect x="420" y="377" width="1" height="2" fill="#ffffff"/>
<rect x="431" y="347" width="1" height="2" fill="#ffffff"/>
<rect x="431" y="377" width="1" height="2" fill="#ffffff"/>
<rect x="442" y="347" width="1" height="2" fill="#ffffff"/>
<rect x="442" y="377" width="1" height="2" fill="#ffffff"/>
<rect x="454" y="347" width="1" height="2" fill="#ffffff"/>
<rect x="454" y="377" width="1" height="2" fill="#ffffff"/>
<rect x="465" y="347" width="1" height="2" fill="#ffffff"/>
<rect x="465" y="377" width="1" height="2" fill="#ffffff"/>
<rect x="476" y="347" width="1" height="2" fill="#ffffff"/>
<rect x="476" y="377" width="1" height="2" fill="#ffffff"/>
<rect x="488" y="347" width="1" height="2" fill="#ffffff"/>
<rect x="488" y="377" width="1" height="2" fill="#ffffff"/>
<rect x="499" y="347" width="1" height="2" fill="#ffffff"/>
<rect x="499" y="377" width="1" height="2" fill="#ffffff"/>
<rect x="510" y="345" width="1" height="4" fill="#ffffff"/>
<rect x="510" y="377" width="1" height="4" fill="#ffffff"/>
<rect x="521" y="347" width="1" height="2" fill="#ffffff"/>
<rect x="521" y="377" width="1" height="2" fill="#ffffff"/>
<rect x="533" y="347" width="1" height="2" fill="#ffffff"/>
<rect x="533" y="377" width="1" height="2" fill="#ffffff"/>
<rect x="544" y="347" width="1" height="2" fill="#ffffff"/>
<rect x="544" y="377" width="1" height="2" fill="#ffffff"/>
<rect x="555" y="347" width="1" height="2" fill="#ffffff"/>
<rect x="555" y="377" width="1" height="2" fill="#ffffff"/>
<rect x="567" y="347" width="1" height="2" fill="#ffffff"/>
<rect x="567" y="377" width="1" height="2" fill="#ffffff"/>
<rect x="578" y="347" width="1" height="2" fill="#ffffff"/>
<rect x="578" y="377" width="1" height="2" fill="#ffffff"/>
<rect x="589" y="347" width="1" height="2" fill="#ffffff"/>
<rect x="589" y="377" width="1" height="2" fill="#ffffff"/>
<rect x="601" y="347" width="1" height="2" fill="#ffffff"/>
<rect x="601" y="377" width="1" height="2" fill="#ffffff"/>
<rect x="612" y="347" width="1" height="2" fill="#ffffff"/>
<rect x="612" y="377" width="1" height="2" fill="#ffffff"/>
<rect x="623" y="345" width="1" height="4" fill="#ffffff"/>
<rect x="623" y="377" width="1" height="4" fill="#ffffff"/>
<rect x="635" y="347" width="1" height="2" fill="#ffffff"/>
<rect x="635" y="377" width="1" height="2" fill="#ffffff"/>
<rect x="58" y="350" width="585" height="27" fill="#14ff00"/>
<rect x="118" y="350" width="1" height="27" fill="#ffff00"/>
<rect x="123" y="350" width="1" height="27" fill="#ffff00"/>
<rect x="233" y="350" width="1" height="27" fill="#ffff00"/>
<rect x="285" y="350" width="1" height="27" fill="#ffff00"/>
<rect x="314" y="350" width="1" height="27" fill="#ffff00"/>
<rect x="464" y="350" width="1" height="27" fill="#ffff00"/>
<rect x="468" y="350" width="1" height="27" fill="#ffff00"/>
<rect x="496" y="350" width="1" height="27" fill="#ffff00"/>
<rect x="524" y="350" width="1" height="27" fill="#ffff00"/>
<rect x="613" y="350" width="1" height="27" fill="#ffff00"/>
<rect x="623" y="350" width="1" height="27" fill="#ffff00"/>
<rect x="243" y="350" width="4" height="27" fill="#00ffff"/>
<rect x="247" y="350" width="2" height="27" fill="#ffff00"/>
<rect x="318" y="350" width="1" height="27" fill="#00ffff"/>
</g>
<defs><filter id="th" x="0" y="0" width="750" height="420" filterUnits="userSpaceOnUse" color-interpolation-filters="sRGB"><feComponentTransfer><feFuncA type="table" tableValues="0 0 0.5 1 1"/></feComponentTransfer></filter><filter id="th2" x="0" y="0" width="750" height="420" filterUnits="userSpaceOnUse" color-interpolation-filters="sRGB"><feComponentTransfer><feFuncA type="discrete" tableValues="0 0 0 0 0 0 0 1 1 1"/></feComponentTransfer></filter></defs>
<filter id="th3" x="0" y="0" width="750" height="420" filterUnits="userSpaceOnUse" color-interpolation-filters="sRGB"><feComponentTransfer><feFuncA type="discrete" tableValues="0 0 0 1 1"/></feComponentTransfer></filter>
<g filter="url(#th3)">
<text y="420.3" fill="#ffffff" font-size="15.3"><tspan x="504.32" textLength="58.08" lengthAdjust="spacingAndGlyphs">Updated:</tspan> <tspan x="568.88" textLength="22.62" lengthAdjust="spacingAndGlyphs">Tue</tspan> <tspan x="598.54" textLength="23.24" lengthAdjust="spacingAndGlyphs">Aug</tspan> &#160;<tspan x="635.6" textLength="8.14" lengthAdjust="spacingAndGlyphs">3</tspan> <tspan x="649.98" textLength="59.9" lengthAdjust="spacing">07:55:23</tspan> <tspan x="716.5" textLength="32.48" lengthAdjust="spacingAndGlyphs">2010</tspan></text>
</g>
<g filter="url(#th2)">
<text y="42" fill="#ffffff" font-size="17.2"><tspan x="58.48" textLength="39.78" lengthAdjust="spacing">2010</tspan></text>
</g>
<g filter="url(#th)">
<text y="29" fill="#ffff00" font-size="13.5"><tspan x="716.98" textLength="33.56" lengthAdjust="spacingAndGlyphs">HETG</tspan></text>
<text y="41.9" fill="#00ffff" font-size="13.5"><tspan x="720.5" textLength="30.04" lengthAdjust="spacingAndGlyphs">LETG</tspan></text>
<text y="92" fill="#2000ff" font-size="13.5"><tspan x="706.4" textLength="29.2" lengthAdjust="spacingAndGlyphs">ACIS</tspan><tspan x="735.3" textLength="12.3" lengthAdjust="spacingAndGlyphs">-</tspan><tspan x="747.5" textLength="2" lengthAdjust="spacingAndGlyphs">I</tspan></text>
<text y="104.9" fill="#ffff00" font-size="13.5"><tspan x="701.4" textLength="29.1" lengthAdjust="spacingAndGlyphs">ACIS</tspan><tspan x="730.49" textLength="10.81" lengthAdjust="spacingAndGlyphs">-</tspan><tspan x="741.2" textLength="8.6" lengthAdjust="spacingAndGlyphs">S</tspan></text>
<text y="117.7" fill="#00ffff" font-size="13.5"><tspan x="709.4" textLength="26.2" lengthAdjust="spacingAndGlyphs">HRC</tspan><tspan x="735.3" textLength="12.3" lengthAdjust="spacingAndGlyphs">-</tspan><tspan x="747.5" textLength="2" lengthAdjust="spacingAndGlyphs">I</tspan></text>
<text y="130.2" fill="#14ff00" font-size="13.5"><tspan x="704.4" textLength="26.1" lengthAdjust="spacingAndGlyphs">HRC</tspan><tspan x="730.49" textLength="10.81" lengthAdjust="spacingAndGlyphs">-</tspan><tspan x="741.2" textLength="8.7" lengthAdjust="spacingAndGlyphs">S</tspan></text>
<text y="164" fill="#ff2000" font-size="13.5"><tspan x="724.98" textLength="25.28" lengthAdjust="spacingAndGlyphs">RAD</tspan></text>
<text y="176.4" fill="#ffff00" font-size="13.5"><tspan x="730.98" textLength="19.56" lengthAdjust="spacingAndGlyphs">CTI</tspan></text>
<text y="188.8" fill="#00ffff" font-size="13.5"><tspan x="691.64" textLength="58.62" lengthAdjust="spacingAndGlyphs">ALTITUDE</tspan></text>
<text y="218.4" fill="#14ff00" font-size="13.5"><tspan x="679.98" textLength="32.38" lengthAdjust="spacing">Solar</tspan> <tspan x="721.16" textLength="28.86" lengthAdjust="spacingAndGlyphs">Wind</tspan></text>
<text y="231" fill="#00ffff" font-size="13.5"><tspan x="651.84" textLength="98.56" lengthAdjust="spacing">Magnetosheath</tspan></text>
<text y="243.6" fill="#ffff00" font-size="13.5"><tspan x="651.84" textLength="100.6" lengthAdjust="spacing">Magnetosphere</tspan></text>
<text y="281" fill="#ff7800" font-size="13.5"><tspan x="695.74" textLength="54.14" lengthAdjust="spacingAndGlyphs">RADMON</tspan></text>
<text y="293.6" fill="#ff7800" font-size="13.5"><tspan x="688.08" textLength="62.32" lengthAdjust="spacingAndGlyphs">DISABLED</tspan></text>
<text y="306.4" fill="#ff2000" font-size="13.5"><tspan x="707.84" textLength="42.56" lengthAdjust="spacingAndGlyphs">SCA00</tspan></text>
<text y="319" fill="#ff2000" font-size="13.5"><tspan x="726.84" textLength="23.14" lengthAdjust="spacingAndGlyphs">SAT</tspan></text>
<text y="348.4" fill="#00ffff" font-size="13.5"><tspan x="717.5" textLength="31.48" lengthAdjust="spacingAndGlyphs">FMT1</tspan></text>
<text y="361" fill="#14ff00" font-size="13.5"><tspan x="717.5" textLength="32.52" lengthAdjust="spacingAndGlyphs">FMT2</tspan></text>
<text y="373.7" fill="#ff7800" font-size="13.5"><tspan x="717.5" textLength="32.52" lengthAdjust="spacingAndGlyphs">FMT3</tspan></text>
<text y="386.4" fill="#ffff00" font-size="13.5"><tspan x="717.5" textLength="31.72" lengthAdjust="spacingAndGlyphs">FMT4</tspan></text>
<text y="399.1" fill="#ff2000" font-size="13.5"><tspan x="717.5" textLength="32.52" lengthAdjust="spacingAndGlyphs">FMT5</tspan></text>
<text y="397" fill="#ffffff" font-size="13.5"><tspan x="47.12" textLength="22.52" lengthAdjust="spacingAndGlyphs">182</tspan></text>
<text y="397" fill="#ffffff" font-size="13.5"><tspan x="160.12" textLength="22.52" lengthAdjust="spacingAndGlyphs">188</tspan></text>
<text y="397" fill="#ffffff" font-size="13.5"><tspan x="272.98" textLength="22.52" lengthAdjust="spacingAndGlyphs">194</tspan></text>
<text y="397" fill="#ffffff" font-size="13.5"><tspan x="386.26" textLength="22.24" lengthAdjust="spacingAndGlyphs">200</tspan></text>
<text y="397" fill="#ffffff" font-size="13.5"><tspan x="499.32" textLength="22.52" lengthAdjust="spacingAndGlyphs">206</tspan></text>
<text y="397" fill="#ffffff" font-size="13.5"><tspan x="612.5" textLength="22.38" lengthAdjust="spacingAndGlyphs">212</tspan></text>
<text y="410.7" fill="#ffffff" font-size="13.5"><tspan x="316.88" textLength="25.86" lengthAdjust="spacing">time</tspan> <tspan x="349.26" textLength="33.48" lengthAdjust="spacingAndGlyphs">(DOY)</tspan></text>
</g>
</svg>
</body></html>
